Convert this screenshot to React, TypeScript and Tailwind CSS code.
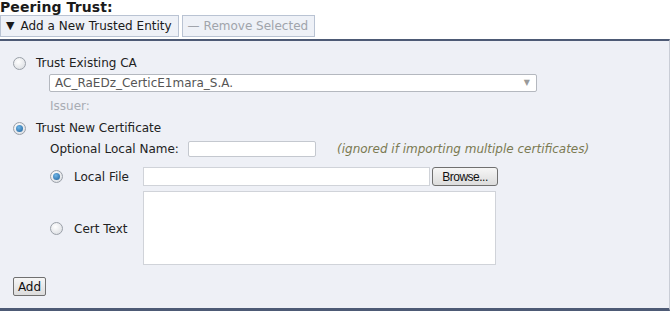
import type { ReactNode } from 'react';

const font = { fontFamily: '"DejaVu Sans", Verdana, sans-serif' };

function Radio({ checked }: { checked?: boolean }) {
  return (
    <span className="relative inline-flex h-[13px] w-[13px] shrink-0 items-center justify-center rounded-full border border-[#9aa0a8] bg-[radial-gradient(circle_at_40%_35%,#ffffff,#d6d9de)]">
      {checked && (
        <span className="h-[7px] w-[7px] rounded-full bg-[radial-gradient(circle_at_40%_35%,#6fb6e8,#1d5f99)]" />
      )}
    </span>
  );
}

function ToolButton({ children, muted }: { children: ReactNode; muted?: boolean }) {
  return (
    <button
      className={
        'flex h-[22px] items-center border border-[#b9c3d3] bg-[#eef1f7] pr-[6px] pl-[5px] text-[12px] ' +
        (muted ? 'text-[#a0a4ab]' : 'text-[#1a1a1a]')
      }
    >
      {children}
    </button>
  );
}

export default function App() {
  return (
    <div className="h-[311px] w-[672px] overflow-hidden bg-white text-[12px] text-[#222]" style={font}>
      <div className="h-[15px] text-[14px] font-bold leading-[14px] tracking-[0.1px] text-[#1a1a1a]">Peering Trust:</div>

      <div className="flex h-[24px] items-start gap-[3px]">
        <ToolButton>
          <span className="mr-[6px] text-[11px]">▼</span>Add a New Trusted Entity
        </ToolButton>
        <ToolButton muted>
          <span className="mr-[4px] text-[#a0a4ab]">—</span>Remove Selected
        </ToolButton>
      </div>

      <div className="mr-[2px] h-[272px] border-t-2 border-r border-b-[3px] border-t-[#4d5a75] border-r-[#c9cdd6] border-b-[#4d5a75] bg-[#eef0f6]">
        <div className="flex h-[33px] items-end gap-[10px] pb-[4px] pl-[13px]">
          <Radio />
          <span className="leading-[14px]">Trust Existing CA</span>
        </div>

        <div className="pl-[49px]">
          <div className="flex h-[18px] w-[488px] items-center justify-between rounded-[2px] border border-[#b4b8bf] bg-white pr-[6px] pl-[5px] text-[#555]">
            <span>AC_RaEDz_CerticE1mara_S.A.</span>
            <span className="text-[8px] text-[#9a9a9a]">▼</span>
          </div>
        </div>

        <div className="flex h-[27px] items-center pl-[50px] text-[#a8acb3]">Issuer:</div>

        <div className="-mt-[1px] flex h-[20px] items-center gap-[10px] pl-[13px]">
          <Radio checked />
          <span>Trust New Certificate</span>
        </div>

        <div className="mt-[3px] flex h-[16px] items-center pl-[50px]">
          <span className="w-[138px]">Optional Local Name:</span>
          <span className="h-[16px] w-[128px] rounded-[2px] border border-[#c4c8cf] bg-white" />
          <span className="ml-[21px] text-[#7b7a52] italic">(ignored if importing multiple certificates)</span>
        </div>

        <div className="mt-[10px] flex h-[19px] items-center pl-[50px]">
          <Radio checked />
          <span className="ml-[11px] w-[69px]">Local File</span>
          <span className="h-[19px] w-[287px] border border-[#d0d3d9] bg-white" />
          <span
            className="ml-[2px] flex h-[19px] w-[66px] items-center justify-center rounded-[3px] border border-[#707070] bg-[linear-gradient(#f6f6f6,#dcdcdc)] text-[12px] tracking-[-0.5px] text-[#111]"
            style={{ fontFamily: '"Liberation Sans", Arial, sans-serif' }}
          >
            Browse...
          </span>
        </div>

        <div className="mt-[5px] flex pl-[50px]">
          <div className="flex w-[93px] items-center pt-[1px]">
            <Radio />
            <span className="ml-[11px]">Cert Text</span>
          </div>
          <span className="h-[74px] w-[353px] border border-[#d0d3d9] bg-white" />
        </div>

        <div className="mt-[12px] pl-[13px]">
          <span className="flex h-[19px] w-[33px] items-center justify-center rounded-[2px] border border-[#707070] bg-[linear-gradient(#f6f6f6,#dcdcdc)] text-[#111]">
            Add
          </span>
        </div>
      </div>
    </div>
  );
}
